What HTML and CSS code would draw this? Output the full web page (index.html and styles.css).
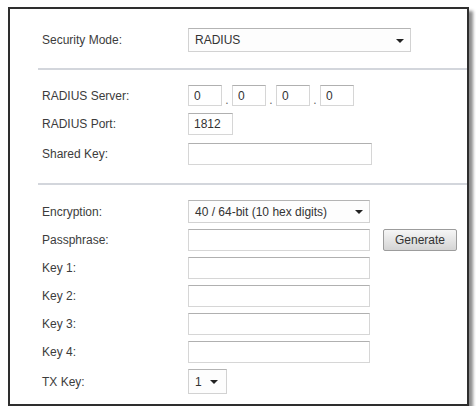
FILE: index.html
```html
<!DOCTYPE html>
<html>
<head>
<meta charset="utf-8">
<link rel="stylesheet" href="styles.css">
</head>
<body>
<div class="panel">
  <div class="row row-sec">
    <span class="label">Security Mode:</span>
    <div class="select select-wide"><span>RADIUS</span><i class="arrow"></i></div>
  </div>
  <div class="divider"></div>
  <div class="row row-ip">
    <span class="label">RADIUS Server:</span>
    <div class="ip">
      <input class="box box-oct" value="0"><span class="dot">.</span>
      <input class="box box-oct" value="0"><span class="dot">.</span>
      <input class="box box-oct" value="0"><span class="dot">.</span>
      <input class="box box-oct" value="0">
    </div>
  </div>
  <div class="row row-port">
    <span class="label">RADIUS Port:</span>
    <input class="box box-port" value="1812">
  </div>
  <div class="row row-shared">
    <span class="label">Shared Key:</span>
    <input class="box box-shared" value="">
  </div>
  <div class="divider divider-2"></div>
  <div class="row row-enc">
    <span class="label">Encryption:</span>
    <div class="select select-enc"><span>40 / 64-bit (10 hex digits)</span><i class="arrow"></i></div>
  </div>
  <div class="row row-key">
    <span class="label">Passphrase:</span>
    <input class="box box-key" value="">
    <button class="btn">Generate</button>
  </div>
  <div class="row row-key">
    <span class="label">Key 1:</span>
    <input class="box box-key" value="">
  </div>
  <div class="row row-key">
    <span class="label">Key 2:</span>
    <input class="box box-key" value="">
  </div>
  <div class="row row-key">
    <span class="label">Key 3:</span>
    <input class="box box-key" value="">
  </div>
  <div class="row row-key">
    <span class="label">Key 4:</span>
    <input class="box box-key" value="">
  </div>
  <div class="row row-tx">
    <span class="label">TX Key:</span>
    <div class="select select-tx"><span>1</span><i class="arrow"></i></div>
  </div>
</div>
</body>
</html>
```

FILE: styles.css
```css
html, body {
  margin: 0;
  padding: 0;
  background: #ffffff;
}
body {
  font-family: "Liberation Sans", Arial, sans-serif;
  font-size: 12px;
  color: #3a3a3a;
}
.panel {
  box-sizing: border-box;
  margin: 7px 0 0 8px;
  width: 461px;
  height: 399px;
  background: #ffffff;
  border: 2px solid #2e2e2e;
  box-shadow: 4px 4px 3px rgba(0, 0, 0, 0.45);
  padding: 19px 0 0 32px;
}
.row {
  display: flex;
  align-items: center;
}
.label {
  width: 146px;
  flex: none;
  color: #3c3c3c;
  font-size: 12px;
}
.select {
  box-sizing: border-box;
  display: flex;
  align-items: center;
  justify-content: space-between;
  border: 1px solid #d2d2d2;
  border-top-color: #b4b4b4;
  background: #fdfdfd;
  padding: 0 6px 0 6px;
  color: #333;
  font-size: 12px;
}
.arrow {
  width: 0;
  height: 0;
  border-left: 4px solid transparent;
  border-right: 4px solid transparent;
  border-top: 4px solid #222;
  margin-top: 1px;
}
.select-wide {
  width: 223px;
  height: 24px;
}
.select-enc {
  width: 182px;
  height: 23px;
}
.select-tx {
  width: 39px;
  height: 25px;
  padding-right: 8px;
}
.divider {
  height: 2px;
  background: #d3d6dc;
  margin: 16px 0 15px -4px;
}
.divider-2 {
  margin-top: 18px;
  margin-bottom: 15px;
}
.box {
  box-sizing: border-box;
  height: 22px;
  margin: 0;
  border: 1px solid #d6d6d6;
  border-top-color: #b0b0b0;
  background: #ffffff;
  padding: 0 5px;
  font-family: "Liberation Sans", Arial, sans-serif;
  font-size: 12px;
  color: #333;
  outline: none;
}
.ip {
  display: flex;
  align-items: center;
}
.box-oct {
  width: 34px;
  height: 21px;
}
.dot {
  width: 10px;
  text-align: center;
  align-self: flex-end;
  line-height: 12px;
  color: #666;
}
.row-port {
  margin-top: 7px;
}
.box-port {
  width: 45px;
}
.row-shared {
  margin-top: 8px;
}
.box-shared {
  width: 184px;
}
.row-key {
  margin-top: 6px;
}
.box-key {
  width: 182px;
}
.btn {
  box-sizing: border-box;
  margin-left: 13px;
  width: 74px;
  height: 22px;
  border: 1px solid #9c9c9c;
  border-radius: 2px;
  background: linear-gradient(#f6f6f6, #d4d4d4);
  font-family: "Liberation Sans", Arial, sans-serif;
  font-size: 12px;
  color: #333;
  padding: 0;
}
.row-tx {
  margin-top: 6px;
}
```
